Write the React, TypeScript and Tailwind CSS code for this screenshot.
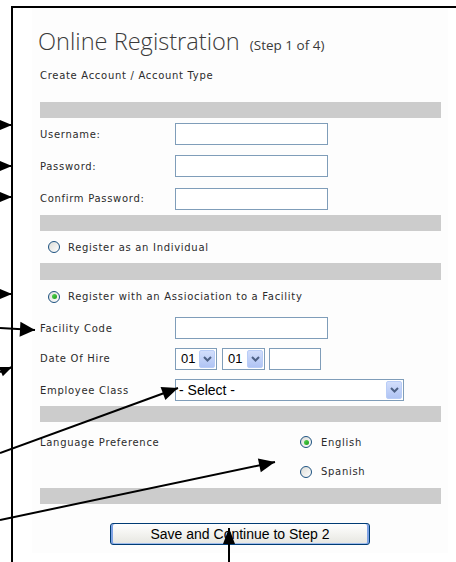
type Pt = [number, number];

// filled triangle for an arrow that ends at `tip`, pointing along from -> tip
function arrowHead(from: Pt, tip: Pt, len: number, half: number) {
  const dx = tip[0] - from[0];
  const dy = tip[1] - from[1];
  const d = Math.hypot(dx, dy);
  const ux = dx / d;
  const uy = dy / d;
  const bx = tip[0] - ux * len;
  const by = tip[1] - uy * len;
  return `${tip[0]},${tip[1]} ${bx - uy * half},${by + ux * half} ${bx + uy * half},${by - ux * half}`;
}

const arrows: { from: Pt; tip: Pt; len: number; half: number }[] = [
  { from: [0, 125], tip: [12, 125], len: 12, half: 5 },
  { from: [0, 166], tip: [12, 166], len: 12, half: 5 },
  { from: [0, 197], tip: [12, 197], len: 12, half: 5 },
  { from: [0, 294], tip: [12, 294], len: 12, half: 5 },
  { from: [0, 328], tip: [35, 330], len: 15, half: 7.5 },
  { from: [0, 372], tip: [12, 367], len: 12, half: 5 },
  { from: [0, 453], tip: [178, 388], len: 16, half: 7 },
  { from: [0, 520], tip: [275, 462], len: 16, half: 7 },
  { from: [229, 562], tip: [229, 528], len: 16, half: 6 },
];

const label = "font-['DejaVu_Sans',sans-serif] text-[10px] text-[#2b2b2b] tracking-[0.7px]";

function Bar({ h = 'h-4' }: { h?: string }) {
  return <div className={`${h} w-[401px] bg-[#cccccc]`} />;
}

function TextBox({ w = 'w-[153px]' }: { w?: string }) {
  return <div className={`${w} h-[22px] border border-[#7f9db9] bg-white`} />;
}

function Radio({ checked = false }: { checked?: boolean }) {
  return (
    <span className="flex h-[12px] w-[12px] shrink-0 items-center justify-center rounded-full border border-[#1c5180] bg-gradient-to-br from-[#dcdcd7] to-white">
      {checked && (
        <span className="h-[5px] w-[5px] rounded-full bg-gradient-to-br from-[#55d751] to-[#1a9a1a]" />
      )}
    </span>
  );
}

function DropButton() {
  return (
    <span className="flex h-[18px] w-[16px] items-center justify-center rounded-[2px] border border-[#b9cdf7] bg-gradient-to-b from-[#d2defb] to-[#b0c4f4]">
      <svg width="9" height="6" viewBox="0 0 9 6">
        <path d="M1 1l3.5 3.5L8 1" fill="none" stroke="#4d6185" strokeWidth="2" />
      </svg>
    </span>
  );
}

function Select({ w, text, pad }: { w: string; text: string; pad: string }) {
  return (
    <div
      className={`${w} flex h-[22px] items-center justify-between border border-[#7f9db9] bg-white pr-px ${pad} font-['Liberation_Sans',Arial,sans-serif] text-[13px] text-black`}
    >
      <span>{text}</span>
      <DropButton />
    </div>
  );
}

function Row({ h, name, children }: { h: string; name: string; children: React.ReactNode }) {
  return (
    <div className={`flex ${h} items-center`}>
      <span className={`w-[135px] ${label}`}>{name}</span>
      {children}
    </div>
  );
}

export default function App() {
  return (
    <div className="relative h-[562px] w-[456px] overflow-hidden bg-white">
      <div className="ml-[11px] mt-[6px] h-[556px] border-l-2 border-t-2 border-black pl-[19px]">
        <div className="h-[545px] w-[416px] bg-[#fdfdfd] pl-2 pt-[18px]">
          {/* heading */}
          <div className="-ml-[2px] flex h-[30px] items-baseline font-['Open_Sans',sans-serif] leading-[30px] text-[#3a3a3a]">
            <span className="text-[23.6px] font-light">Online Registration</span>
            <span className="ml-[10px] text-[13.5px]">(Step 1 of 4)</span>
          </div>
          <div className={`mt-[13px] h-[14px] leading-[14px] ${label}`}>Create Account / Account Type</div>

          <div className="mt-[19px]">
            <Bar />
            <Row h="h-[32px]" name="Username:">
              <TextBox />
            </Row>
            <Row h="h-[32px]" name="Password:">
              <TextBox />
            </Row>
            <Row h="h-[33px]" name="Confirm Password:">
              <TextBox />
            </Row>
            <Bar />

            <div className="flex h-[32px] items-center gap-2 pl-2">
              <Radio />
              <span className={label}>Register as an Individual</span>
            </div>
            <Bar h="h-[17px]" />

            <div className="flex h-[33px] items-center gap-2 pl-2">
              <Radio checked />
              <span className={label}>Register with an Assiociation to a Facility</span>
            </div>
            <Row h="h-[30px]" name="Facility Code">
              <TextBox />
            </Row>
            <Row h="h-[31px]" name="Date Of Hire">
              <div className="flex items-center">
                <Select w="w-[42px]" text="01" pad="pl-[5px]" />
                <Select w="ml-[5px] w-[43px]" text="01" pad="pl-[5px]" />
                <div className="ml-[4px]">
                  <TextBox w="w-[52px]" />
                </div>
              </div>
            </Row>
            <Row h="h-[32px]" name="Employee Class">
              <Select w="w-[229px]" text="- Select -" pad="pl-[3px] text-[14px]" />
            </Row>
            <Bar />

            {/* language choice */}
            <div className="flex h-[66px] pt-[5px]">
              <div className={`flex h-[30px] w-[260px] items-center ${label}`}>Language Preference</div>
              <div>
                <div className="flex h-[30px] items-center gap-[9px]">
                  <Radio checked />
                  <span className={label}>English</span>
                </div>
                <div className="flex h-[29px] items-center gap-[9px]">
                  <Radio />
                  <span className={label}>Spanish</span>
                </div>
              </div>
            </div>
            <Bar />

            <div className="mt-[19px] pl-[70px]">
              <button className="flex h-[22px] w-[260px] items-center justify-center rounded-[3px] border border-[#003c74] bg-gradient-to-b from-white to-[#e6e6e0] font-['Liberation_Sans',Arial,sans-serif] text-[14px] text-black shadow-[inset_2px_0_0_#7ea2e4,inset_-2px_0_0_#7ea2e4,inset_0_-1px_0_#9fbcec]">
                Save and Continue to Step 2
              </button>
            </div>
          </div>
        </div>
      </div>

      {/* callout arrows */}
      <svg className="pointer-events-none absolute inset-0" width="456" height="562" viewBox="0 0 456 562">
        {arrows.map((a, i) => (
          <g key={i}>
            <line x1={a.from[0]} y1={a.from[1]} x2={a.tip[0]} y2={a.tip[1]} stroke="black" strokeWidth="2" />
            <polygon points={arrowHead(a.from, a.tip, a.len, a.half)} fill="black" />
          </g>
        ))}
      </svg>
    </div>
  );
}
